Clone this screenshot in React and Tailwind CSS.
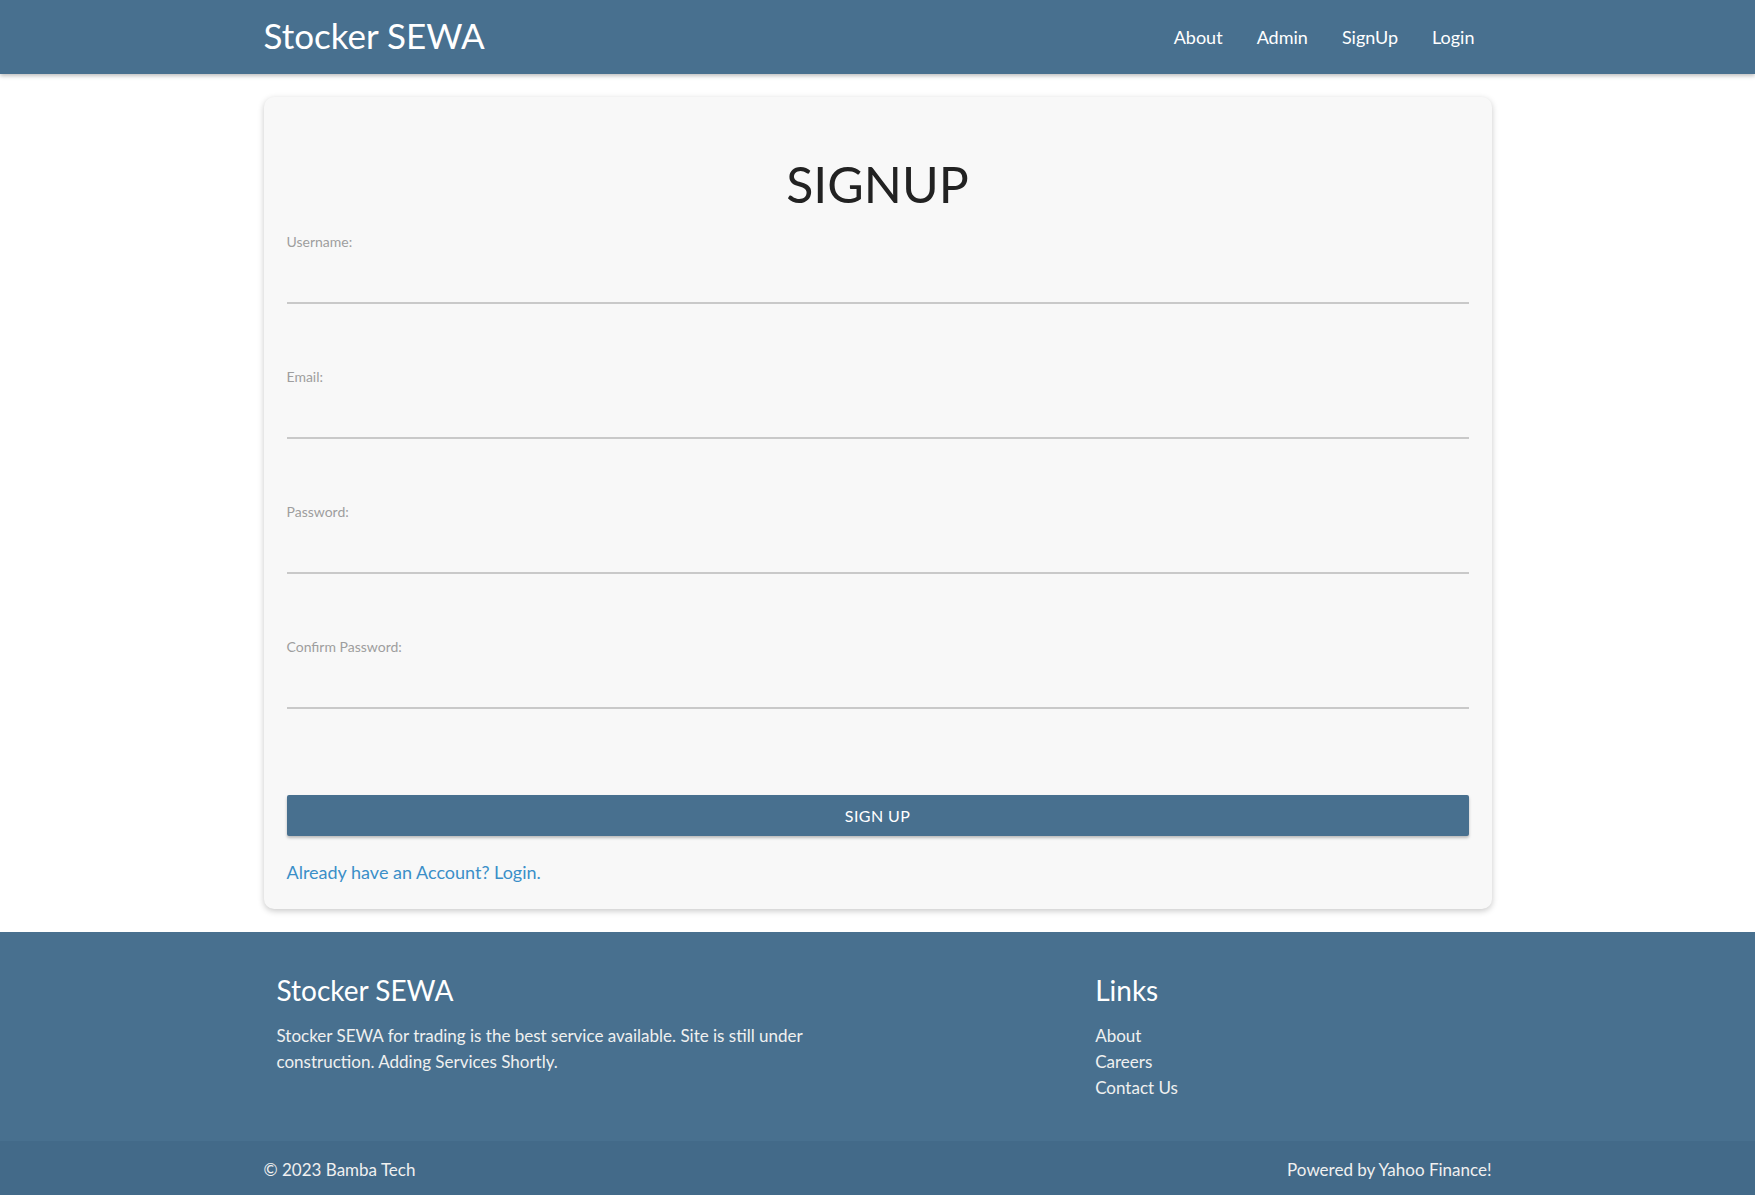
import React from 'react';

const navLinks = ['About', 'Admin', 'SignUp', 'Login'];
const fields = ['Username:', 'Email:', 'Password:', 'Confirm Password:'];
const footerLinks = ['About', 'Careers', 'Contact Us'];

const App = () => {
  return (
    <div className="min-h-screen bg-white flex flex-col" style={{ fontFamily: 'Lato, "Open Sans", sans-serif' }}>
      {/* Navbar */}
      <nav className="h-[74px] bg-[#48708f] shadow-[0_2px_4px_rgba(0,0,0,0.25)] relative z-10">
        <div className="w-[1228px] mx-auto h-full flex items-center justify-between">
          <a className="text-white text-[35px] leading-none pb-1">Stocker SEWA</a>
          <ul className="flex items-center">
            {navLinks.map(link => (
              <li key={link} className="px-[17px] text-white text-[18px]">{link}</li>
            ))}
          </ul>
        </div>
      </nav>

      {/* Signup card */}
      <main className="pt-[23px] pb-[23px]">
        <div className="w-[1228px] mx-auto bg-[#f8f8f8] rounded-[10px] shadow-[0_2px_6px_rgba(0,0,0,0.22)] px-[23px] pt-[56px] pb-[24px]">
          <h3 className="text-center text-[50px] leading-[62px] text-[#222] mb-[17px]">SIGNUP</h3>
          <form onSubmit={e => e.preventDefault()}>
            {fields.map(label => (
              <div key={label} className="mb-[63px]">
                <label className="block text-[14px] leading-[20px] text-[#9e9e9e]">{label}</label>
                <input
                  type={label.includes('Password') ? 'password' : label === 'Email:' ? 'email' : 'text'}
                  className="w-full h-[52px] bg-transparent border-b-2 border-[#c9c9c9] outline-none text-[17px]"
                />
              </div>
            ))}
            <button className="w-full h-[41px] mt-[23px] bg-[#48708f] text-white text-[16px] uppercase rounded-[2px] shadow-[0_2px_3px_rgba(0,0,0,0.25)] tracking-wide">
              Sign Up
            </button>
          </form>
          <a className="block mt-[23px] text-[18px] leading-[26px] text-[#3b8fc8]">Already have an Account? Login.</a>
        </div>
      </main>

      {/* Footer */}
      <footer className="bg-[#48708f] text-white">
        <div className="w-[1228px] mx-auto grid grid-cols-12 pt-[40px] pb-[40px]">
          <div className="col-span-6 px-[13px]">
            <h5 className="text-[28px] leading-[36px] mb-[15px]">Stocker SEWA</h5>
            <p className="text-[17px] leading-[26px] text-[#f0f0f0] max-w-[560px]">
              Stocker SEWA for trading is the best service available. Site is still under construction. Adding Services Shortly.
            </p>
          </div>
          <div className="col-start-9 col-span-4 px-[13px]">
            <h5 className="text-[28px] leading-[36px] mb-[15px]">Links</h5>
            <ul>
              {footerLinks.map(link => (
                <li key={link} className="text-[17px] leading-[26px] text-[#f0f0f0]">{link}</li>
              ))}
            </ul>
          </div>
        </div>
        <div className="bg-[#436a89] h-[57px]">
          <div className="w-[1228px] mx-auto h-full flex items-center justify-between text-[17px] text-[#f0f0f0]">
            <span>© 2023 Bamba Tech</span>
            <span>Powered by Yahoo Finance!</span>
          </div>
        </div>
      </footer>
    </div>
  );
};

export default App;
